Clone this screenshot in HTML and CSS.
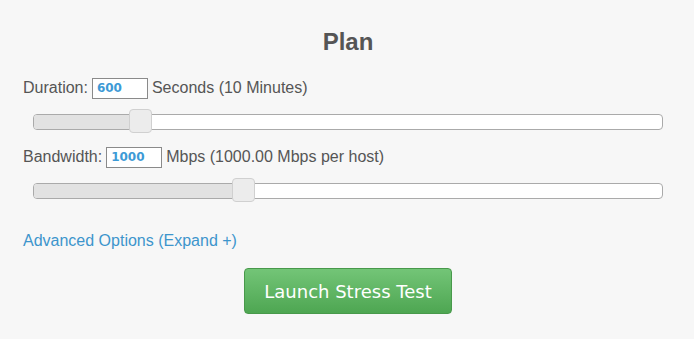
FILE: index.html
```html
<!DOCTYPE html>
<html>
<head>
  <link rel="stylesheet" href="styles.css">
</head>
<body>
  <div class="plan">
    <h2 class="plan-title">Plan</h2>

    <div class="field">
      <label>Duration:</label>
      <input class="num-input" type="text" value="600">
      <span>Seconds (10 Minutes)</span>
    </div>
    <div class="slider">
      <div class="slider-range" style="width: 107px;"></div>
      <span class="slider-handle" style="left: 95px;"></span>
    </div>

    <div class="field">
      <label>Bandwidth:</label>
      <input class="num-input" type="text" value="1000">
      <span>Mbps (1000.00 Mbps per host)</span>
    </div>
    <div class="slider">
      <div class="slider-range" style="width: 210px;"></div>
      <span class="slider-handle" style="left: 198px;"></span>
    </div>

    <a class="advanced" href="#">Advanced Options (Expand +)</a>

    <div class="actions">
      <button class="launch-button">Launch Stress Test</button>
    </div>
  </div>
</body>
</html>
```

FILE: styles.css
```css
body {
  margin: 0;
  padding: 0;
  background-color: #f7f7f7;
  font-family: "Liberation Sans", Arial, sans-serif;
  color: #555555;
}

.plan {
  padding: 0 21px 0 23px;
}

.plan-title {
  margin: 0;
  padding-top: 28px;
  height: 49px;
  text-align: center;
  font-size: 24px;
  line-height: 28px;
  font-weight: bold;
  color: #555555;
}

.field {
  display: flex;
  align-items: center;
  height: 22px;
  font-size: 16px;
}

.num-input {
  box-sizing: border-box;
  width: 56px;
  height: 21px;
  margin: 0 4px 0 4px;
  padding: 0 4px;
  border: 1px solid #8a8a8a;
  background-color: #ffffff;
  font-family: "DejaVu Sans", Verdana, sans-serif;
  font-size: 12px;
  font-weight: bold;
  color: #3d9ad6;
  outline: none;
}

.slider {
  position: relative;
  box-sizing: border-box;
  height: 16px;
  margin: 15px 10px 16px 10px;
  border: 1px solid #aaaaaa;
  border-radius: 4px;
  background-color: #ffffff;
}

.slider-range {
  height: 100%;
  border-radius: 3px 0 0 3px;
  background-color: #e2e2e2;
}

.slider-handle {
  position: absolute;
  top: -6px;
  box-sizing: border-box;
  width: 23px;
  height: 24px;
  border: 1px solid #d0d0d0;
  border-radius: 4px;
  background-color: #ececec;
}

.advanced {
  display: block;
  margin-top: 31px;
  font-size: 16px;
  line-height: 22px;
  color: #3d95cc;
  text-decoration: none;
}

.actions {
  display: flex;
  justify-content: center;
  margin-top: 16px;
}

.launch-button {
  width: 208px;
  height: 46px;
  border: 1px solid #48994b;
  border-radius: 4px;
  background: linear-gradient(#73c577, #4ea652);
  font-family: "DejaVu Sans", Verdana, sans-serif;
  font-size: 18px;
  color: #ffffff;
  cursor: pointer;
}
```
